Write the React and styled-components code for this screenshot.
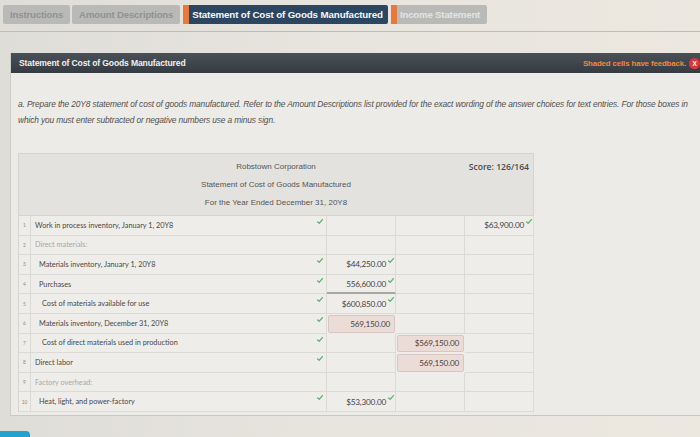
import React from 'react';
import styled, { createGlobalStyle, css } from 'styled-components';

const GlobalStyle = createGlobalStyle`
    html, body {
        margin: 0;
        padding: 0;
        width: 700px;
        height: 437px;
        overflow: hidden;
        background: #e6e3dc;
        font-family: "Liberation Sans", Arial, sans-serif;
    }
`;

const Page = styled.div`
    width: 700px;
    height: 437px;
    overflow: hidden;
    background: linear-gradient(90deg, #dfddd8 0%, #e7e4de 45%, #ece8e0 100%);
`;

const TabBar = styled.div`
    display: flex;
    align-items: stretch;
    gap: 2px;
    height: 19px;
    padding: 5px 3px 7px;
    border-bottom: 1px solid #bfbcb6;
`;

const Tab = styled.div`
    display: flex;
    align-items: center;
    padding: 0 ${p => p.$pad || 6}px 0 ${p => p.$padLeft ?? p.$pad ?? 6}px;
    border-radius: 2px;
    font-size: 9.6px;
    font-weight: bold;
    letter-spacing: -0.15px;
    white-space: nowrap;
    background: #b9bab8;
    color: #8f9291;
    ${p => p.$active && css`
        background: #2c4662;
        color: #f4f6f8;
        font-size: 9.8px;
    `}
    ${p => p.$light && css`
        color: #e4e4e2;
    `}
    ${p => p.$flag && css`
        border-left: 6px solid #e8783c;
        border-radius: 0 2px 2px 0;
        margin-left: 1px;
    `}
`;

const Panel = styled.div`
    margin: 21px 0 0 10px;
    background: #edebe7;
    border-left: 1px solid #cdcbc6;
    border-bottom: 1px solid #c9c7c2;
`;

const PanelHeader = styled.div`
    display: flex;
    align-items: center;
    justify-content: space-between;
    height: 20px;
    padding-left: 8px;
    background: linear-gradient(180deg, #4a5058 0%, #363b42 100%);
`;

const PanelTitle = styled.span`
    color: #eef0f2;
    font-size: 8.6px;
    font-weight: bold;
    letter-spacing: -0.15px;
`;

const Feedback = styled.div`
    display: flex;
    align-items: center;
    gap: 3px;
    color: #ee8a3c;
    font-size: 7.8px;
    font-weight: bold;
    letter-spacing: -0.1px;
`;

const CloseDot = styled.span`
    display: inline-flex;
    align-items: center;
    justify-content: center;
    width: 11px;
    height: 11px;
    border-radius: 50%;
    background: #d83a3a;
    color: #fff;
    font-size: 6.5px;
    font-weight: bold;
`;

const PanelBody = styled.div`
    padding: 23px 0 3px 7px;
`;

const Instructions = styled.p`
    margin: 0;
    font-style: italic;
    font-size: 8.4px;
    line-height: 16px;
    color: #505050;
    letter-spacing: -0.14px;
    white-space: nowrap;
`;

const Table = styled.div`
    width: 515px;
    margin-top: 25px;
    border-top: 1px solid #d6d4d0;
    border-left: 1px solid #d6d4d0;
`;

const TitleBlock = styled.div`
    display: grid;
    grid-template-columns: 1fr auto 1fr;
    height: 61px;
    background: #e4e2de;
    border-right: 1px solid #d6d4d0;
    border-bottom: 1px solid #d6d4d0;
`;

const Titles = styled.div`
    grid-column: 2;
    display: flex;
    flex-direction: column;
    align-items: center;
    padding-top: 8px;
    gap: 8px;
    font-size: 8px;
    color: #555;
    line-height: 10px;
`;

const Score = styled.div`
    grid-column: 3;
    justify-self: end;
    padding: 7px 4px 0 0;
    font-family: "Open Sans", sans-serif;
    font-size: 8.6px;
    font-weight: 600;
    color: #4a4a4a;
`;

const Grid = styled.div`
    display: grid;
    grid-template-columns: 12px 296px 69px 69px 69px;
    grid-auto-rows: 19.6px;
    background: #eeedea;
`;

const Cell = styled.div`
    position: relative;
    display: flex;
    align-items: center;
    border-right: 1px solid #dcdad6;
    border-bottom: 1px solid #dcdad6;
    font-family: Lato, "Noto Sans", sans-serif;
    font-size: 7.3px;
    color: #454545;
    white-space: nowrap;
    min-width: 0;
    box-sizing: border-box;
`;

const NumCell = styled(Cell)`
    justify-content: center;
    font-size: 4.8px;
    color: #8a8a8a;
`;

const LabelCell = styled(Cell)`
    padding-left: ${p => [4, 8, 11][p.$indent || 0]}px;
    color: ${p => (p.$muted ? '#a9a7a4' : '#474747')};
`;

const ValueCell = styled(Cell)`
    justify-content: flex-end;
    font-size: 8.2px;
    letter-spacing: -0.2px;
    padding-right: ${p => (p.$check ? 9 : 5)}px;
    ${p => p.$underline && css`
        border-bottom: 2px solid #a9a7a3;
    `}
    ${p => p.$shaded && css`
        margin: 1px;
        border: 1px solid #d9c6c2;
        border-radius: 2px;
        background: #ecdcd8;
        padding-right: 4px;
    `}
`;

const TickMark = styled.svg`
    position: absolute;
    top: 3px;
    right: ${p => p.$right || 3}px;
    width: 6px;
    height: 5px;
`;

const Footer = styled.div`
    padding-top: 15px;
`;

const NextButton = styled.div`
    width: 30px;
    height: 12px;
    background: #22a2cc;
    border-radius: 0 4px 0 0;
`;

const Tick = ({ right }) => (
    <TickMark $right={right} viewBox="0 0 6 5">
        <path d="M0.6 2.9 L2.2 4.3 L5.4 0.6" fill="none" stroke="#5db473" strokeWidth="1.3" strokeLinecap="round" strokeLinejoin="round" />
    </TickMark>
);

const rows = [
    { n: 1, label: 'Work in process inventory, January 1, 20Y8', indent: 0, check: true, c: { v: '$63,900.00', check: true } },
    { n: 2, label: 'Direct materials:', indent: 0, muted: true },
    { n: 3, label: 'Materials inventory, January 1, 20Y8', indent: 1, check: true, a: { v: '$44,250.00', check: true } },
    { n: 4, label: 'Purchases', indent: 1, check: true, a: { v: '556,600.00', check: true, underline: true } },
    { n: 5, label: 'Cost of materials available for use', indent: 2, check: true, a: { v: '$600,850.00', check: true } },
    { n: 6, label: 'Materials inventory, December 31, 20Y8', indent: 1, check: true, a: { v: '569,150.00', shaded: true, underline: true } },
    { n: 7, label: 'Cost of direct materials used in production', indent: 2, check: true, b: { v: '$569,150.00', shaded: true } },
    { n: 8, label: 'Direct labor', indent: 0, check: true, b: { v: '569,150.00', shaded: true } },
    { n: 9, label: 'Factory overhead:', indent: 0, muted: true },
    { n: 10, label: 'Heat, light, and power-factory', indent: 1, check: true, a: { v: '$53,300.00', check: true } },
];

const Value = ({ data }) => {
    if (!data) return <ValueCell />;
    return (
        <ValueCell $check={data.check} $shaded={data.shaded} $underline={data.underline}>
            {data.v}
            {data.check && <Tick right={1} />}
        </ValueCell>
    );
};

const App = () => (
    <Page>
        <GlobalStyle />
        <TabBar>
            <Tab $pad={7}>Instructions</Tab>
            <Tab $pad={7}>Amount Descriptions</Tab>
            <Tab $active $flag $pad={5} $padLeft={3}>Statement of Cost of Goods Manufactured</Tab>
            <Tab $light $flag $pad={7} $padLeft={3}>Income Statement</Tab>
        </TabBar>
        <Panel>
            <PanelHeader>
                <PanelTitle>Statement of Cost of Goods Manufactured</PanelTitle>
                <Feedback>
                    Shaded cells have feedback.
                    <CloseDot>X</CloseDot>
                </Feedback>
            </PanelHeader>
            <PanelBody>
                <Instructions>
                    a. Prepare the 20Y8 statement of cost of goods manufactured. Refer to the Amount Descriptions list provided for the exact wording of the answer choices for text entries. For those boxes in
                    <br />
                    which you must enter subtracted or negative numbers use a minus sign.
                </Instructions>
                <Table>
                    <TitleBlock>
                        <Titles>
                            <span>Robstown Corporation</span>
                            <span>Statement of Cost of Goods Manufactured</span>
                            <span>For the Year Ended December 31, 20Y8</span>
                        </Titles>
                        <Score>Score: 126/164</Score>
                    </TitleBlock>
                    <Grid>
                        {rows.map(r => (
                            <React.Fragment key={r.n}>
                                <NumCell>{r.n}</NumCell>
                                <LabelCell $indent={r.indent} $muted={r.muted}>
                                    {r.label}
                                    {r.check && <Tick right={3} />}
                                </LabelCell>
                                <Value data={r.a} />
                                <Value data={r.b} />
                                <Value data={r.c} />
                            </React.Fragment>
                        ))}
                    </Grid>
                </Table>
            </PanelBody>
        </Panel>
        <Footer>
            <NextButton />
        </Footer>
    </Page>
);

export default App;
